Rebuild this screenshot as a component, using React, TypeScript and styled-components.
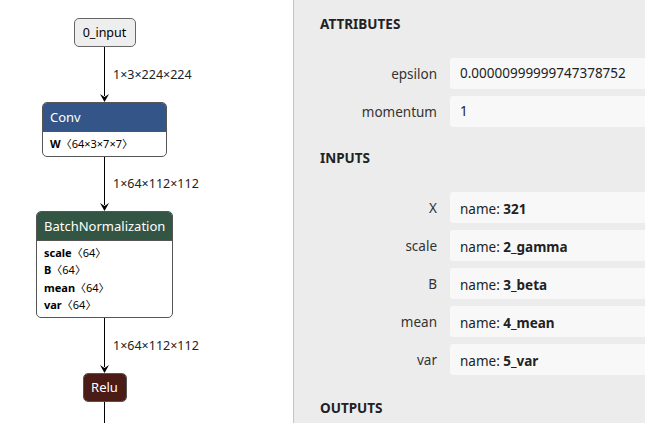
import React from 'react';
import styled, { createGlobalStyle } from 'styled-components';

const GlobalStyle = createGlobalStyle`
  html, body {
    margin: 0;
    padding: 0;
    height: 100%;
    overflow: hidden;
  }
  body {
    font-family: "Noto Sans", "Noto Sans CJK SC", sans-serif;
    color: #222;
  }
  #root {
    height: 100%;
  }
`;

interface Row {
  name: string;
  shape: string;
}

const convRows: Row[] = [{ name: 'W', shape: '64×3×7×7' }];
const bnRows: Row[] = [
  { name: 'scale', shape: '64' },
  { name: 'B', shape: '64' },
  { name: 'mean', shape: '64' },
  { name: 'var', shape: '64' },
];

const attributes = [
  { label: 'epsilon', value: '0.00000999999747378752' },
  { label: 'momentum', value: '1' },
];

const inputs = [
  { label: 'X', value: '321' },
  { label: 'scale', value: '2_gamma' },
  { label: 'B', value: '3_beta' },
  { label: 'mean', value: '4_mean' },
  { label: 'var', value: '5_var' },
];

function Arrow() {
  return (
    <ArrowHead width="9" height="8" viewBox="0 0 9 8">
      <polygon points="0,0 4.5,8 9,0 4.5,3" fill="#000" />
    </ArrowHead>
  );
}

function Edge({ label, height }: { label?: string; height?: number }) {
  return (
    <EdgeRow style={height ? { height } : undefined} $grow={!height}>
      <span />
      <EdgeTrack>
        <EdgeLine />
        {height && <Arrow />}
      </EdgeTrack>
      <EdgeLabel>{label}</EdgeLabel>
    </EdgeRow>
  );
}

function OpNode({
  title,
  color,
  width,
  rows,
}: {
  title: string;
  color: string;
  width: number;
  rows?: Row[];
}) {
  return (
    <Node $width={width}>
      <Header $color={color} $single={!rows}>
        {title}
      </Header>
      {rows && (
        <Body>
          {rows.map((row) => (
            <BodyRow key={row.name}>
              <b>{row.name}</b>
              {'\u3008' + row.shape + '\u3009'}
            </BodyRow>
          ))}
        </Body>
      )}
    </Node>
  );
}

function Property({
  label,
  children,
  tall,
}: {
  label: string;
  children: React.ReactNode;
  tall?: boolean;
}) {
  return (
    <PropRow $tall={tall}>
      <PropLabel>{label}</PropLabel>
      <PropValue $tall={tall}>{children}</PropValue>
    </PropRow>
  );
}

export default function App() {
  return (
    <>
      <GlobalStyle />
      <Page>
        <Graph>
          <Column>
            <InputNode>0_input</InputNode>
            <Edge label="1×3×224×224" height={55} />
            <OpNode title="Conv" color="#335588" width={125} rows={convRows} />
            <Edge label="1×64×112×112" height={54} />
            <OpNode
              title="BatchNormalization"
              color="#335544"
              width={137}
              rows={bnRows}
            />
            <Edge label="1×64×112×112" height={55} />
            <OpNode title="Relu" color="#4b1b16" width={44} />
            <Edge />
          </Column>
        </Graph>
        <Sidebar>
          <SectionTitle>ATTRIBUTES</SectionTitle>
          <PropList>
            {attributes.map((a) => (
              <Property key={a.label} label={a.label}>
                {a.value}
              </Property>
            ))}
          </PropList>
          <SectionTitle>INPUTS</SectionTitle>
          <PropList $tight>
            {inputs.map((i) => (
              <Property key={i.label} label={i.label} tall>
                name: <b>{i.value}</b>
              </Property>
            ))}
          </PropList>
          <SectionTitle>OUTPUTS</SectionTitle>
        </Sidebar>
      </Page>
    </>
  );
}

const Page = styled.div`
  display: flex;
  height: 100%;
  background: #fff;
`;

const Graph = styled.div`
  width: 293px;
  flex-shrink: 0;
  display: flex;
  padding-top: 18px;
  box-sizing: border-box;
`;

const Column = styled.div`
  width: 209px;
  display: flex;
  flex-direction: column;
  align-items: center;
`;

const InputNode = styled.div`
  width: 62px;
  height: 29px;
  box-sizing: border-box;
  border: 1px solid #666;
  border-radius: 5px;
  background: #eeeeee;
  display: flex;
  align-items: center;
  justify-content: center;
  font-size: 12.5px;
  color: #000;
`;

const EdgeRow = styled.div<{ $grow: boolean }>`
  width: 100%;
  display: grid;
  grid-template-columns: 100px 9px 1fr;
  flex: ${(p) => (p.$grow ? '1' : 'none')};
`;

const EdgeTrack = styled.div`
  display: flex;
  flex-direction: column;
  align-items: center;
`;

const EdgeLine = styled.div`
  flex: 1;
  width: 1px;
  background: #000;
`;

const ArrowHead = styled.svg`
  display: block;
  margin-top: -2px;
`;

const EdgeLabel = styled.span`
  align-self: center;
  padding-left: 4px;
  font-size: 12.5px;
  color: #222;
  white-space: nowrap;
`;

const Node = styled.div<{ $width: number }>`
  width: ${(p) => p.$width}px;
  box-sizing: border-box;
  border: 1px solid #555;
  border-radius: 5px;
  overflow: hidden;
  background: #fff;
`;

const Header = styled.div<{ $color: string; $single: boolean }>`
  height: ${(p) => (p.$single ? 27 : 28)}px;
  background: ${(p) => p.$color};
  color: #fff;
  font-size: 13px;
  display: flex;
  align-items: center;
  justify-content: ${(p) => (p.$single ? 'center' : 'flex-start')};
  padding: 0 7px;
  white-space: nowrap;
`;

const Body = styled.div`
  border-top: 1px solid #555;
  padding: 3px 7px 3px;
`;

const BodyRow = styled.div`
  font-size: 11px;
  line-height: 17.5px;
  color: #000;
  white-space: nowrap;

  b {
    font-weight: 700;
  }
`;

const Sidebar = styled.div`
  flex: 1;
  min-width: 0;
  overflow: hidden;
  background: #ececec;
  border-left: 1px solid #c4c4c4;
  padding: 15px 0 0 26px;
  display: flex;
  flex-direction: column;
`;

const SectionTitle = styled.div`
  font-size: 13.5px;
  line-height: 18px;
  font-weight: 700;
  color: #222;
`;

const PropList = styled.div<{ $tight?: boolean }>`
  display: flex;
  flex-direction: column;
  gap: ${(p) => (p.$tight ? 7 : 8)}px;
  margin: ${(p) => (p.$tight ? '25px 0 24px' : '25px 0 23px')};
`;

const PropRow = styled.div<{ $tall?: boolean }>`
  display: grid;
  grid-template-columns: 117px 1fr;
  column-gap: 13px;
  height: ${(p) => (p.$tall ? 31 : 30)}px;
  align-items: center;
`;

const PropLabel = styled.div`
  text-align: right;
  font-size: 13.5px;
  color: #333;
`;

const PropValue = styled.div<{ $tall?: boolean }>`
  height: 100%;
  width: 260px;
  box-sizing: border-box;
  background: #f8f8f8;
  border-radius: 3px;
  padding: ${(p) => (p.$tall ? '3px' : '0')} 10px 0;
  font-size: 13.5px;
  line-height: ${(p) => (p.$tall ? 28 : 31)}px;
  color: #222;
  white-space: pre;

  b {
    font-weight: 700;
  }
`;
